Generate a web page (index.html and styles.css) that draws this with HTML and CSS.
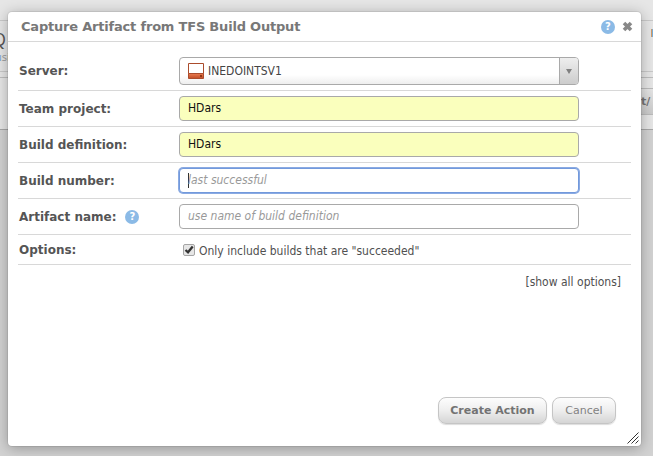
FILE: index.html
```html
<!DOCTYPE html>
<html lang="en">
<head>
<meta charset="utf-8">
<title>Capture Artifact</title>
<link rel="stylesheet" href="styles.css">
</head>
<body>
<div class="page">
  <div class="band top"></div>
  <div class="band head"><div class="q">Q<small><b>u</b>si</small></div><i class="flag"></i></div>
  <div class="band gap"></div>
  <div class="band tools"><span class="tab">t/</span></div>
  <div class="band rest"></div>
</div>
<section class="dialog">
  <header class="header">
    <h1><span class="t-title">Capture Artifact from TFS Build Output</span></h1>
    <span class="help">?</span>
    <svg class="close" width="11" height="11" viewBox="0 0 11 11"><path d="M2 2L9 9M9 2L2 9" stroke="#888" stroke-width="3.6"/></svg>
  </header>
  <div class="form">
    <div class="row server"><label>Server:</label>
      <div class="select">
        <svg width="16" height="16" viewBox="0 0 16 16"><defs><linearGradient id="g" x2="0" y2="1"><stop stop-color="#ea7d52"/><stop offset="1" stop-color="#bf4c25"/></linearGradient></defs><path d="M.5 .5h15v10H.5z" fill="#fff" stroke="#ab4c2c"/><path d="M.5 10.500h15v5H.5z" fill="url(#g)" stroke="#ab4c2c"/><path d="M12 12h2v2h-2z" fill="#923714"/></svg>
        <span class="value">INEDOINTSV1</span>
        <span class="arrow"><svg width="6" height="5" viewBox="0 0 6 5"><path d="M0 0h6L3 5z" fill="#808080"/></svg></span>
      </div>
    </div>
    <div class="row"><label>Team project:</label><div class="input filled">HDars</div></div>
    <div class="row"><label>Build definition:</label><div class="input filled">HDars</div></div>
    <div class="row"><label>Build number:</label><div class="input focus"><em class="t-last">last successful</em></div></div>
    <div class="row"><label>Artifact name:<span class="help">?</span></label><div class="input"><em class="t-use">use name of build definition</em></div></div>
    <div class="row options"><label>Options:</label>
      <div class="check"><svg width="12" height="12" viewBox="0 0 12 12"><rect x=".5" y=".5" width="11" height="11" rx="1.500" fill="#e6e6e6" stroke="#a5a5a5"/><path d="M2.500 6L5 8.300L9.700 2.500" fill="none" stroke="#333" stroke-width="2.300"/></svg><span>Only include builds that are "succeeded"</span></div>
    </div>
  </div>
  <div class="more"><span>[show all options]</span></div>
  <footer class="footer"><div class="button primary"><span>Create Action</span></div><div class="button"><span>Cancel</span></div></footer>
  <svg class="grip" width="12" height="12" viewBox="0 0 12 12"><path d="M.5 11.500L11.500 .5M4.500 11.500L11.500 4.500M8.500 11.500L11.500 8.500" stroke="#333" stroke-width="1"/></svg>
</section>
</body>
</html>
```
FILE: styles.css
```css
* { box-sizing: border-box; }
body { margin: 0; width: 653px; height: 456px; overflow: hidden; position: relative; background: #cdcdcd; font-family: "DejaVu Sans Condensed", "DejaVu Sans", sans-serif; font-stretch: condensed; font-size: 12px; color: #505050; }
.page { display: flex; flex-direction: column; height: 456px; }
.band { border-bottom: 1px solid #c9c9c9; background: #e6e6e6; display: flex; justify-content: space-between; flex: none; }
.top { height: 21px; }
.head { height: 51px; }
.gap { height: 6px; border-color: #bdbdbd; }
.tools { height: 52px; border-color: #a7a7a7; justify-content: flex-end; }
.rest { flex: 1; background: #d2d2d2; border: 0; }
.q { font: 18px/20px "Open Sans", sans-serif; color: #555; padding-top: 8px; margin-left: -8px; }
.q small { display: block; font: 11px/15px "Open Sans", sans-serif; color: #999; padding-left: 3px; }
.q b { color: #77a5db; font-weight: 400; }
.flag { width: 2px; height: 8px; margin-top: 8px; background: #78aed8; border-left: 1px solid #d59b66; }
.tab { width: 20px; height: 27px; margin-top: 10px; border: 1px solid #bbb; border-right: 0; background: linear-gradient(#e5e5e5, #cacaca); font: bold 11px/25px "DejaVu Sans", sans-serif; padding-left: 7px; color: #747474; }
.dialog { position: absolute; left: 8px; top: 12px; width: 633px; height: 434px; background: #fff; border-radius: 4px; box-shadow: 0 0 0 1px #0001, 0 2px 14px rgba(0,0,0,.3); display: flex; flex-direction: column; }
.header { height: 30px; flex: none; border-bottom: 1px solid #d8d8d8; display: flex; align-items: center; padding: 0 8px 0 13px; }
h1 { flex: 1; margin: 0; font: bold 13px/28px "DejaVu Sans", sans-serif; color: #787878; }
.t-title { letter-spacing: -.2px; }
.help { display: inline-block; width: 14px; height: 14px; border-radius: 50%; background: #8bbae6; color: #fff; font: bold 10px/14px "DejaVu Sans", sans-serif; text-align: center; flex: none; }
.close { margin-left: 7px; }
.form { padding: 0 10px; }
.row { height: 36px; border-bottom: 1px solid #d8d8d8; display: flex; align-items: center; padding-left: 1px; }
.row.server { height: 49px; padding-top: 9px; }
label { width: 160px; flex: none; display: flex; align-items: center; font: bold 12px/16px "DejaVu Sans", sans-serif; color: #555; }
label .help { margin-left: 9px; }
.input, .select { width: 400px; border: 1px solid #a9a9a9; border-radius: 4px; background: #fff; }
.input { height: 25px; padding-left: 8px; font-size: 12px; line-height: 23px; }
.filled { background: #faffbd; color: #111; }
.focus { border-color: #7299dc; box-shadow: 0 0 0 1px #8aaae2; }
.focus::before { content: ""; display: inline-block; width: 1px; height: 15px; background: #333; vertical-align: middle; margin-right: -1px; }
em { color: #999; }
.select { height: 28px; display: flex; align-items: center; padding-left: 8px; background: linear-gradient(#fff 65%, #eee); overflow: hidden; }
.value { margin-left: 4px; flex: 1; color: #444; }
.arrow { width: 19px; height: 26px; border-left: 1px solid #a9a9a9; background: linear-gradient(#eee, #ccc); display: flex; align-items: center; justify-content: center; padding-top: 2px; }
.row.options { height: 30px; }
.check { display: flex; align-items: center; padding-left: 4px; }
.check span { margin-left: 4px; padding-top: 3px; }
.more { text-align: right; padding: 10px 20px 0 0; line-height: 15px; }
.footer { margin-top: auto; display: flex; justify-content: flex-end; gap: 5px; padding: 0 25px 22px 0; }
.button { height: 27px; width: 64px; border: 1px solid #c5c5c5; border-radius: 8px; background: linear-gradient(#fdfdfd, #eee 50%, #d5d5d5); box-shadow: 0 1px 1px #ddd; text-align: center; font: 11px/25px "DejaVu Sans", sans-serif; color: #818181; }
.primary { width: 109px; font-weight: bold; color: #737373; }
.grip { position: absolute; right: 2px; bottom: 2px; }
```
